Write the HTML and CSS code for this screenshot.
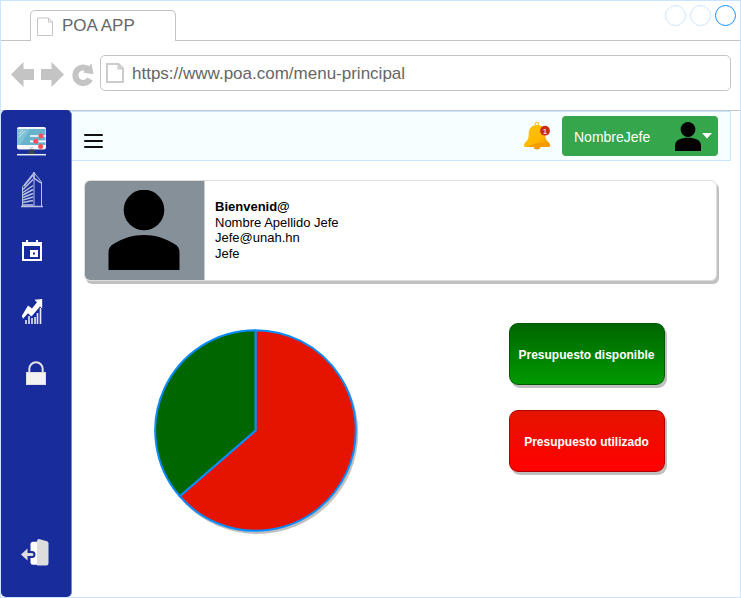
FILE: index.html
```html
<!DOCTYPE html>
<html lang="es">
<head>
<meta charset="utf-8">
<title>POA APP</title>
<link rel="stylesheet" href="styles.css">
</head>
<body>
<div class="window">
  <header class="tabs">
    <div class="tabs-lead"></div>
    <div class="tab">
      <svg class="tab-doc" width="17" height="20" viewBox="0 0 17 20"><path d="M.5 1h11l4 4v13.500H.5zM11.500 1v4h4" fill="#fff" stroke="#c4c4c4"/></svg>
      <span>POA APP</span>
    </div>
    <div class="controls"><i></i><i></i><i class="active"></i></div>
  </header>
  <div class="toolbar">
    <svg class="nav" width="86" height="26" viewBox="10 61 86 26">
      <path d="M11 74.500L23.500 62V69H34V80H23.500V87ZM64 74.500L51.500 62V69H41V80H51.500V87Z" fill="#c4c4c4"/>
      <path d="M88.500 69.500A7.800 7.800 0 1 0 90 79" fill="none" stroke="#c4c4c4" stroke-width="6"/>
      <path d="M91.500 63.500L93.500 74.200L83 72.500Z" fill="#c4c4c4"/>
    </svg>
    <div class="address">
      <svg width="18" height="20" viewBox="0 0 18 20"><path d="M1 1h11.500l4.500 4.500v13.500H1zM12.500 1v4.500h4.500" fill="#fff" stroke="#ccc" stroke-width="2"/></svg>
      <span>https://www.poa.com/menu-principal</span>
    </div>
  </div>
  <div class="page">
    <nav class="sidebar">
      <svg class="monitor" width="30" height="30" viewBox="17 126 30 30">
        <rect x="17" y="127" width="29" height="22.500" rx="2" fill="#f4f6fb"/>
        <path d="M17 129h28.500v16H17z" fill="#66b3cb"/><path d="M17 129h13L20 145H17z" fill="#80c2d5"/>
        <path d="M19 134l4-4M19 137l6-6" stroke="#c9e8f0"/>
        <path d="M30 136h16M30 141.300h16M30 146.500h16" stroke="#fff" stroke-width="1.700"/>
        <circle cx="41" cy="136" r="2.500" fill="#ff4d5e"/><circle cx="35.800" cy="141.300" r="2.500" fill="#ff4d5e"/><circle cx="40.600" cy="146.500" r="2.500" fill="#ff4d5e"/>
        <path d="M30.500 147.300l1 1 1-1" fill="none" stroke="#788093" stroke-width=".8"/>
        <path d="M29 149.500h5l1.500 4.500h-8z" fill="#344251"/><path d="M17 154.700h29" stroke="#e4eafa" stroke-width="1.500"/>
      </svg>
      <svg class="building" width="24" height="38" viewBox="20 170 24 38">
        <g fill="none" stroke="#b9c0e2">
          <path d="M33.500 173L22.500 187V206M33.500 172L41.500 182V206M34 173V206" stroke-width="1"/>
          <path d="M24 186l9-11M23 189.500l10-10M23 192.500l10-7M23 195l10-5.500M23 197.500l10-4M23 200l10-3M23 202.500l10-2M23 205h10" stroke-width="1.500"/>
          <path d="M34 172v6l7 5M21 206.500h22" stroke-width="1.500"/>
        </g>
      </svg>
      <svg class="calendar" width="22" height="22" viewBox="21 240 22 22">
        <path fill-rule="evenodd" fill="#fff" d="M22 242h4v-2h2v2h8v-2h2v2h4v19H22zM24 246v13h16v-13z"/>
        <path fill-rule="evenodd" fill="#fff" d="M30 250h8v7h-8zM33 252.500v2h2v-2z"/>
      </svg>
      <svg class="growth" width="22" height="26" viewBox="21 299 22 26">
        <path d="M26 324v-4M29 324v-8M32 324v-6M35 324v-7M37.500 324v-11M40.500 324v-16" stroke="#e8eaf6" stroke-width="1.600"/>
        <path fill="#fff" stroke="#182c9c" stroke-width="1.200" paint-order="stroke" d="M42.200 299v9.500l-2.200-2-8.500 10-3.500-3.200-5 5.500L21.800 316l6.200-10.500 4 3 5-6.200-2.500-2.500z"/>
      </svg>
      <svg class="lock" width="22" height="26" viewBox="25 360 22 26">
        <path d="M29.300 374V369a6.700 6.700 0 0 1 13.400 0V374" fill="none" stroke="#e4e4e4" stroke-width="2"/>
        <rect x="26.500" y="372.500" width="19" height="12" fill="#f3f3f3" stroke="#dedede"/>
      </svg>
      <svg class="exit" width="30" height="30" viewBox="20 538 30 30">
        <path fill="#fff" d="M33 541.800h6v23h-6a2.500 2.500 0 0 1-2.500-2.500v-18a2.500 2.500 0 0 1 2.500-2.500z"/>
        <path d="M21 554.500l6.500-6v4.500h4.500a1.500 1.500 0 0 1 0 3h-4.500v4.500z" fill="#ddd" stroke="#182c9c" stroke-width="4" paint-order="stroke"/>
        <path fill="#ddd" d="M39 539l8 2.200q1.500.4 1.500 2v20q0 2.200-2 2.200H37V541q0-2 2-2z"/>
      </svg>
    </nav>
    <div class="main">
      <header class="topbar">
        <div class="menu"><i></i><i></i><i></i></div>
        <svg class="bell" width="28" height="30" viewBox="523 121 28 30">
          <defs><linearGradient id="gold" x2="1" y2="1"><stop stop-color="#ffc400"/><stop offset=".6" stop-color="#ffb900"/><stop offset="1" stop-color="#ee8a00"/></linearGradient></defs>
          <circle cx="537" cy="124" r="1.700" fill="none" stroke="#ffc33a" stroke-width="1.300"/>
          <path d="M533.500 146h7a3.500 3.500 0 0 1-7 0z" fill="#f29a00"/>
          <path d="M537 125c-5 0-8.300 3.300-8.300 8.500 0 4.500-.5 6.500-3.500 9-2 1.700-1.300 4.500.5 4.500h22.600c1.900 0 2.500-2.800.5-4.500-3-2.500-3.500-4.500-3.500-9 0-5.200-3.300-8.500-8.300-8.500z" fill="url(#gold)"/>
          <path d="M533 144.500c6-2 12-2 16.500.8 0 1-.4 1.700-1.500 1.700h-22z" fill="#f39b00"/>
          <circle cx="545" cy="130.700" r="4.900" fill="#c92b16"/>
          <text x="545" y="133.700" text-anchor="middle" class="count">1</text>
        </svg>
        <div class="user">
          <span>NombreJefe</span>
          <svg width="26" height="29" viewBox="0 0 26 29"><circle cx="13" cy="7.500" r="7.400"/><path d="M0 29V23.500C0 18 6.500 15.800 13 15.800S26 18 26 23.500V29z"/></svg>
          <svg class="caret" width="10" height="6" viewBox="0 0 10 6"><path d="M0 0h10L5 5.500z" fill="#fff"/></svg>
        </div>
      </header>
      <section class="welcome">
        <div class="avatar">
          <svg width="72" height="81" viewBox="0 0 72 81"><circle cx="36" cy="20" r="20.300"/><path d="M.5 80V62.500Q.5 57 5 54.300C24 41.800 48 41.800 67 54.300Q71.500 57 71.500 62.500V80z"/></svg>
        </div>
        <div class="details">
          <strong>Bienvenid@</strong>
          <span>Nombre Apellido Jefe</span>
          <span>Jefe@unah.hn</span>
          <span>Jefe</span>
        </div>
      </section>
      <section class="budget">
        <svg class="pie" width="208" height="208" viewBox="152 328 208 208">
          <circle cx="257.200" cy="433" r="101" fill="#c0c0c0"/>
          <g stroke="#0a8cff" stroke-width="2" stroke-linejoin="round">
            <path d="M255.500 430.500V330.200A100.300 100.300 0 1 1 179.700 496.200z" fill="#e51400"/>
            <path d="M255.500 430.500L179.700 496.200A100.300 100.300 0 0 1 255.500 330.200z" fill="#006600"/>
          </g>
        </svg>
        <div class="legend">
          <div class="amount available">Presupuesto disponible</div>
          <div class="amount used">Presupuesto utilizado</div>
        </div>
      </section>
    </div>
  </div>
</div>
</body>
</html>
```
FILE: styles.css
```css
* { box-sizing: border-box; }
body { margin: 0; background: #fff; font-family: "Liberation Sans", Arial, sans-serif; color: #000; }
svg { display: block; flex: none; }

.window { width: 741px; height: 598px; border: 1px solid #cce5ff; display: flex; flex-direction: column; overflow: hidden; }

.tabs { height: 40px; display: flex; flex: none; }
.tabs-lead { width: 29px; border-bottom: 1px solid #c4c4c4; }
.tab { width: 146px; height: 31px; margin-top: 9px; padding: 6px 0 0 6px; display: flex; gap: 8px; border: 1px solid #c4c4c4; border-bottom: 0; border-radius: 5px 5px 0 0; font-size: 17px; line-height: 17px; color: #666; }
.controls { flex: 1; display: flex; justify-content: flex-end; gap: 4px; padding: 4px 4px 0 0; border-bottom: 1px solid #c4c4c4; }
.controls i { width: 21px; height: 21px; border: 1px solid #cce5ff; border-radius: 50%; }
.controls .active { border-color: #1690ff; }

.toolbar { height: 70px; flex: none; display: flex; padding: 14px 9px 0; gap: 4px; border-bottom: 1px solid #c4c4c4; }
.nav { margin-top: 6px; }
.address { flex: 1; height: 36px; border: 1px solid #c4c4c4; border-radius: 5px; display: flex; align-items: center; gap: 8px; padding-left: 5px; font-size: 17px; line-height: 20px; color: #666; }
.address span { padding-top: 2px; }

.page { flex: 1; display: flex; min-height: 0; }
.sidebar { width: 71px; flex: none; margin-top: -1px; background: #182c9c; border-right: 1px solid #6c8ebf; border-radius: 5px; }
.monitor { margin: 16px 0 0 16px; }
.building { margin: 14px 0 0 19px; }
.calendar { margin: 32px 0 0 20px; }
.growth { margin: 37px 0 0 20px; }
.lock { margin: 35px 0 0 24px; }
.exit { margin: 152px 0 0 19px; }

.main { flex: 1; min-width: 0; }
.topbar { width: 659px; height: 50px; background: #f5ffff; border: 1px solid #cce5ff; border-left: 0; display: flex; padding: 4px 12px 0; }
.menu { width: 19px; margin-top: 18px; display: grid; gap: 4px; align-content: start; }
.menu i { height: 2px; background: #111; border-radius: 1px; }
.bell { margin: 5px 11px 0 auto; }
.count { font-size: 8px; fill: #fff; font-family: "Liberation Sans", sans-serif; }
.user { width: 156px; height: 40px; background: #35a64b; border-radius: 4px; display: flex; align-items: center; padding: 1px 6px 0 12px; color: #fff; font-size: 14px; }
.user span { flex: 1; }
.caret { margin: -1px 0 0 1px; }

.welcome { width: 633px; height: 101px; margin: 19px 0 0 12px; display: flex; border: 1px solid #ddd; border-radius: 6px; background: #fff; box-shadow: 2px 3px 0 #c0c0c0; overflow: hidden; }
.avatar { width: 120px; background: #869098; border-right: 1px solid #ccc; padding: 9px 0 0 23px; }
.details { padding: 18px 0 0 10px; display: flex; flex-direction: column; font-size: 13px; line-height: 15.6px; }

.budget { display: flex; padding: 42px 0 0 80px; }
.pie { margin-top: 5px; }
.legend { margin-left: 149px; display: grid; gap: 25px; align-content: start; }
.amount { width: 156px; height: 62px; padding: 1px 1px 0 0; border-radius: 9px; border: 1px solid; display: flex; align-items: center; justify-content: center; color: #fff; font-size: 12px; font-weight: bold; box-shadow: 2px 3px 0 #c0c0c0; }
.available { background: linear-gradient(#006600, #009900); border-color: #005700; }
.used { background: linear-gradient(#e51400, #ff0000); border-color: #b20000; }
```
